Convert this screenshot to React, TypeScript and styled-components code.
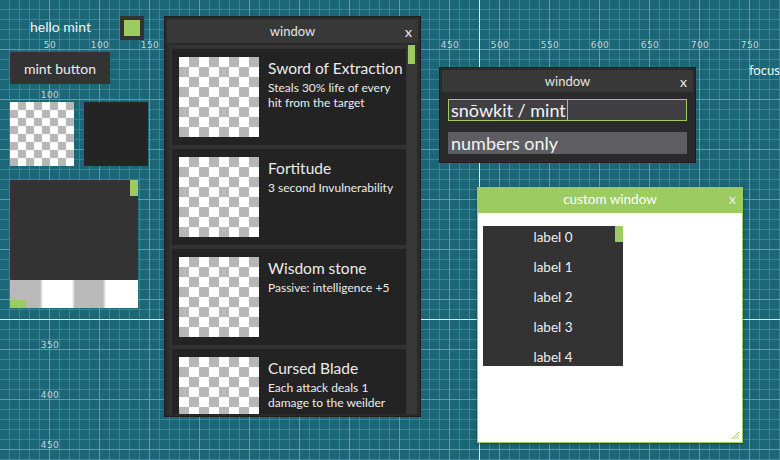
import React from "react";
import styled, { createGlobalStyle } from "styled-components";

const GlobalStyle = createGlobalStyle`
  html, body {
    margin: 0;
    padding: 0;
    background: #1b6677;
  }
  body {
    font-family: Lato, "Open Sans", sans-serif;
  }
`;

const green = "#9ccb62";

const Canvas = styled.div`
  position: relative;
  width: 780px;
  height: 460px;
  overflow: hidden;
  background-color: #1b6677;
  background-image:
    linear-gradient(to right, #5c9dab 1px, transparent 1px),
    linear-gradient(to bottom, #5c9dab 1px, transparent 1px),
    linear-gradient(to right, #3a8495 1px, transparent 1px),
    linear-gradient(to bottom, #3a8495 1px, transparent 1px);
  background-size: 50px 50px, 50px 50px, 10px 10px, 10px 10px;
  background-position: 49px 0, 0 49px, 9px 0, 0 9px;
`;

const RulerLabel = styled.span<{ $x: number; $y: number }>`
  position: absolute;
  left: ${(p) => p.$x - 15}px;
  top: ${(p) => p.$y - 6}px;
  width: 30px;
  text-align: center;
  font: 9px/12px "DejaVu Sans", sans-serif;
  letter-spacing: 0.5px;
  color: #c5d8dc;
`;

const CrossV = styled.div`
  position: absolute;
  left: 479px;
  top: 0;
  width: 1px;
  height: 100%;
  background: #d6e9ed;
`;

const CrossH = styled.div`
  position: absolute;
  left: 0;
  top: 319px;
  width: 100%;
  height: 1px;
  background: #d6e9ed;
`;

const HelloLabel = styled.span`
  position: absolute;
  left: 30px;
  top: 18px;
  font-size: 14px;
  line-height: 18px;
  color: #f2f2f2;
`;

const CheckBox = styled.div`
  position: absolute;
  left: 120px;
  top: 16px;
  width: 24px;
  height: 24px;
  box-sizing: border-box;
  padding: 4px;
  background: #333;
`;

const CheckMark = styled.div`
  width: 16px;
  height: 16px;
  background: ${green};
`;

const MintButton = styled.button`
  position: absolute;
  left: 10px;
  top: 52px;
  width: 100px;
  height: 32px;
  border: none;
  padding: 0;
  background: #333;
  color: #ececec;
  font-family: Lato, "Open Sans", sans-serif;
  font-size: 14px;
`;

const Checker = styled.div<{ $size: number; $cell: number }>`
  flex: none;
  width: ${(p) => p.$size}px;
  height: ${(p) => p.$size}px;
  background: repeating-conic-gradient(#b7b7b7 0 25%, #ffffff 0 50%) 0 0 /
    ${(p) => p.$cell * 2}px ${(p) => p.$cell * 2}px;
`;

const SampleImage = styled(Checker)`
  position: absolute;
  left: 10px;
  top: 102px;
`;

const DarkTile = styled.div`
  position: absolute;
  left: 84px;
  top: 102px;
  width: 64px;
  height: 64px;
  background: #242424;
`;

const ScrollPanel = styled.div`
  position: absolute;
  left: 10px;
  top: 180px;
  width: 128px;
  height: 128px;
  display: flex;
  flex-direction: column;
  background: #333;
`;

const ScrollView = styled.div`
  flex: 1;
`;

const StripeRow = styled.div`
  height: 28px;
  background: linear-gradient(
    to right,
    #b9b9b9 0,
    #b9b9b9 30px,
    #fff 33px,
    #fff 62px,
    #b9b9b9 65px,
    #b9b9b9 93px,
    #fff 96px,
    #fff 128px
  );
`;

const VThumb = styled.div`
  position: absolute;
  right: 0;
  top: 0;
  width: 8px;
  height: 16px;
  background: ${green};
`;

const HThumb = styled.div`
  position: absolute;
  left: 0;
  bottom: 0;
  width: 16px;
  height: 8px;
  background: ${green};
`;

const Window = styled.div`
  position: absolute;
  box-sizing: border-box;
  display: flex;
  flex-direction: column;
  border: 1px solid #1f1f1f;
  padding: 2px;
  background: #2a2a2a;
`;

const ItemsWindow = styled(Window)`
  left: 164px;
  top: 16px;
  width: 257px;
  height: 401px;
`;

const InputWindow = styled(Window)`
  left: 439px;
  top: 67px;
  width: 257px;
  height: 96px;
`;

const TitleBar = styled.div<{ $h: number }>`
  flex: none;
  height: ${(p) => p.$h}px;
  box-sizing: border-box;
  display: grid;
  grid-template-columns: 1fr auto 1fr;
  align-items: center;
  background: #383838;
  color: #e4e4e4;
  font-size: 13px;
`;

const TitleText = styled.span`
  grid-column: 2;
`;

const CloseX = styled.span`
  grid-column: 3;
  justify-self: end;
  margin-right: 6px;
  font-size: 14px;
  color: #f0f0f0;
`;

const ListPane = styled.div`
  flex: 1;
  min-height: 0;
  display: flex;
  margin: 2px 1px 0 2px;
  background: #333;
`;

const ItemColumn = styled.div`
  flex: 1;
  overflow: hidden;
  display: flex;
  flex-direction: column;
  gap: 4px;
  padding: 4px 1px 0 3px;
`;

const Item = styled.div`
  flex: none;
  height: 96px;
  box-sizing: border-box;
  display: flex;
  padding: 8px 0 8px 7px;
  background: #232323;
`;

const ItemText = styled.div`
  flex: 1;
  min-width: 0;
  margin-left: 9px;
  padding-right: 4px;
  display: flex;
  flex-direction: column;
  color: #ececec;
`;

const ItemTitle = styled.span`
  font-size: 15.5px;
  line-height: 22px;
  white-space: nowrap;
`;

const ItemDesc = styled.span`
  margin-top: 1px;
  font-size: 12px;
  line-height: 15px;
`;

const ScrollTrack = styled.div`
  flex: none;
  width: 9px;
  padding-left: 1px;
  background: #383838;
`;

const TrackThumb = styled.div`
  width: 7px;
  height: 19px;
  background: ${green};
`;

const InputBody = styled.div`
  display: flex;
  flex-direction: column;
  gap: 11px;
  padding: 7px 6px;
`;

const TextField = styled.div<{ $active?: boolean }>`
  height: 22px;
  box-sizing: border-box;
  display: flex;
  align-items: center;
  padding: 0 2px;
  border: 1px solid ${(p) => (p.$active ? green : "transparent")};
  background: ${(p) => (p.$active ? "#404044" : "#5e5e62")};
  color: #f4f4f4;
  font-size: 18px;
  white-space: nowrap;
`;

const Caret = styled.span`
  width: 1px;
  height: 20px;
  margin-left: 1px;
  background: ${green};
`;

const FocusLabel = styled.span`
  position: absolute;
  left: 749px;
  top: 61px;
  font-size: 13px;
  line-height: 18px;
  color: #f2f2f2;
`;

const CustomWindow = styled.div`
  position: absolute;
  left: 477px;
  top: 187px;
  width: 266px;
  height: 256px;
  box-sizing: border-box;
  display: flex;
  flex-direction: column;
  border: 1px solid ${green};
  background: #fff;
  box-shadow: 0 1px 3px rgba(0, 0, 0, 0.35);
`;

const GreenTitle = styled(TitleBar)`
  padding-bottom: 4px;
  background: ${green};
  color: #fff;
  font-size: 13.5px;
`;

const CustomBody = styled.div`
  flex: 1;
  padding: 13px 0 0 5px;
`;

const LabelList = styled.div`
  position: relative;
  width: 140px;
  height: 140px;
  overflow: hidden;
  background: #333;
`;

const LabelRows = styled.div`
  margin-top: -4px;
  display: flex;
  flex-direction: column;
`;

const LabelRow = styled.div`
  height: 30px;
  display: flex;
  align-items: center;
  justify-content: center;
  color: #f0f0f0;
  font-size: 13.5px;
`;

const ResizeGrip = styled.svg`
  position: absolute;
  right: 2px;
  bottom: 2px;
`;

const items = [
  { title: "Sword of Extraction", desc: "Steals 30% life of every hit from the target" },
  { title: "Fortitude", desc: "3 second Invulnerability" },
  { title: "Wisdom stone", desc: "Passive: intelligence +5" },
  { title: "Cursed Blade", desc: "Each attack deals 1 damage to the weilder" },
];

const xMarks = [50, 100, 150, 200, 250, 300, 350, 400, 450, 500, 550, 600, 650, 700, 750];
const yMarks = [100, 150, 200, 250, 300, 350, 400, 450];

export default function App() {
  return (
    <>
      <GlobalStyle />
      <Canvas>
        {xMarks.map((x) => (
          <RulerLabel key={"x" + x} $x={x} $y={45}>
            {x}
          </RulerLabel>
        ))}
        {yMarks.map((y) => (
          <RulerLabel key={"y" + y} $x={50} $y={y - 5}>
            {y}
          </RulerLabel>
        ))}
        <CrossV />
        <CrossH />

        <HelloLabel>hello mint</HelloLabel>
        <CheckBox>
          <CheckMark />
        </CheckBox>
        <MintButton>mint button</MintButton>
        <SampleImage $size={64} $cell={8} />
        <DarkTile />
        <ScrollPanel>
          <ScrollView />
          <StripeRow />
          <VThumb />
          <HThumb />
        </ScrollPanel>

        <ItemsWindow>
          <TitleBar $h={24}>
            <TitleText>window</TitleText>
            <CloseX>x</CloseX>
          </TitleBar>
          <ListPane>
            <ItemColumn>
              {items.map((it) => (
                <Item key={it.title}>
                  <Checker $size={80} $cell={10} />
                  <ItemText>
                    <ItemTitle>{it.title}</ItemTitle>
                    <ItemDesc>{it.desc}</ItemDesc>
                  </ItemText>
                </Item>
              ))}
            </ItemColumn>
            <ScrollTrack>
              <TrackThumb />
            </ScrollTrack>
          </ListPane>
        </ItemsWindow>

        <InputWindow>
          <TitleBar $h={22}>
            <TitleText>window</TitleText>
            <CloseX>x</CloseX>
          </TitleBar>
          <InputBody>
            <TextField $active>
              snōwkit / mint
              <Caret />
            </TextField>
            <TextField>numbers only</TextField>
          </InputBody>
        </InputWindow>

        <FocusLabel>focus</FocusLabel>

        <CustomWindow>
          <GreenTitle $h={25}>
            <TitleText>custom window</TitleText>
            <CloseX>x</CloseX>
          </GreenTitle>
          <CustomBody>
            <LabelList>
              <LabelRows>
                {[0, 1, 2, 3, 4].map((n) => (
                  <LabelRow key={n}>label {n}</LabelRow>
                ))}
              </LabelRows>
              <VThumb />
            </LabelList>
          </CustomBody>
          <ResizeGrip width="9" height="9" viewBox="0 0 9 9">
            <path d="M8 1 L1 8 M8 4 L4 8 M8 7 L7 8" stroke={green} strokeWidth="1" />
          </ResizeGrip>
        </CustomWindow>
      </Canvas>
    </>
  );
}
